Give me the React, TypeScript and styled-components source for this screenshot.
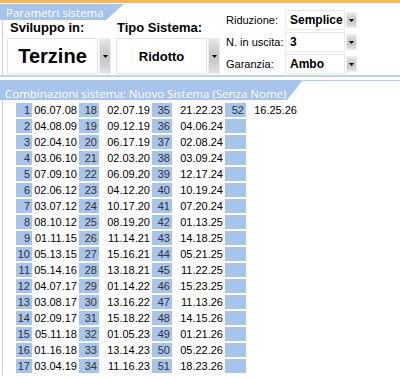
import styled, { createGlobalStyle } from 'styled-components'

const GlobalStyle = createGlobalStyle`
  body {
    margin: 0;
    background: #fff;
    font-family: 'Liberation Sans', Arial, sans-serif;
  }
`

const col1 = ['06.07.08', '04.08.09', '02.04.10', '03.06.10', '07.09.10', '02.06.12', '03.07.12', '08.10.12', '01.11.15', '05.13.15', '05.14.16', '04.07.17', '03.08.17', '02.09.17', '05.11.18', '01.16.18', '03.04.19']
const col2 = ['02.07.19', '09.12.19', '06.17.19', '02.03.20', '06.09.20', '04.12.20', '10.17.20', '08.19.20', '11.14.21', '15.16.21', '13.18.21', '01.14.22', '13.16.22', '15.18.22', '01.05.23', '13.14.23', '11.16.23']
const col3 = ['21.22.23', '04.06.24', '02.08.24', '03.09.24', '12.17.24', '10.19.24', '07.20.24', '01.13.25', '14.18.25', '05.21.25', '11.22.25', '15.23.25', '11.13.26', '14.15.26', '01.21.26', '05.22.26', '18.23.26']
const col4 = ['16.25.26']

const columns = [col1, col2, col3, col4]

const DropButton = ({ $inset }: { $inset?: boolean }) => (
  <Button $inset={$inset}>
    <svg width="5" height="3" viewBox="0 0 5 3">
      <path d="M0 0h5L2.5 3z" fill="#000" />
    </svg>
  </Button>
)

const App = () => {
  const rows = Array.from({ length: 17 }, (_, r) => r)

  return (
    <Page>
      <GlobalStyle />
      <TopBand />
      <ParamSection>
        <LeftBlock>
          <Tab>Parametri sistema</Tab>
          <Groups>
            <Group>
              <GroupLabel $indent={3}>Sviluppo in:</GroupLabel>
              <BigSelect>
                <BigValue $size={20}>Terzine</BigValue>
                <DropButton />
              </BigSelect>
            </Group>
            <Group>
              <GroupLabel $indent={1}>Tipo Sistema:</GroupLabel>
              <BigSelect>
                <BigValue $size={13}>Ridotto</BigValue>
                <DropButton />
              </BigSelect>
            </Group>
          </Groups>
        </LeftBlock>
        <FormBlock>
          <FormRow>
            <FormLabel>Riduzione:</FormLabel>
            <SmallValue>Semplice</SmallValue>
            <DropButton $inset />
          </FormRow>
          <FormRow>
            <FormLabel>N. in uscita:</FormLabel>
            <SmallValue>3</SmallValue>
            <DropButton $inset />
          </FormRow>
          <FormRow>
            <FormLabel>Garanzia:</FormLabel>
            <SmallValue>Ambo</SmallValue>
            <DropButton $inset />
          </FormRow>
        </FormBlock>
      </ParamSection>

      <ComboSection>
        <TabRow>
          <Tab $tall>Combinazioni sistema: Nuovo Sistema (Senza Nome)</Tab>
          <TabLine />
        </TabRow>
        <GridBody>
          <Grid>
            {rows.map((r) =>
              columns.map((col, c) => {
                const n = c * 17 + r + 1
                const value = col[r]
                const showNum = value !== undefined
                return [
                  <NumCell key={`n${r}-${c}`}>{showNum ? n : ''}</NumCell>,
                  <ValCell key={`v${r}-${c}`}>{value ?? ''}</ValCell>,
                ]
              })
            )}
          </Grid>
        </GridBody>
      </ComboSection>
    </Page>
  )
}

export default App

const Page = styled.div`
  width: 400px;
  height: 378px;
  overflow: hidden;
  background: #fff;
`
const TopBand = styled.div`
  height: 3px;
  background: #f6b65b;
`
const ParamSection = styled.div`
  display: flex;
  border-bottom: 2px solid #bcd3f0;
`
const LeftBlock = styled.div`
  display: flex;
  flex-direction: column;
  width: 220px;
`
const Tab = styled.div<{ $tall?: boolean }>`
  box-sizing: border-box;
  width: ${(p) => (p.$tall ? '303px' : '124px')};
  height: ${(p) => (p.$tall ? '20px' : '16px')};
  margin-top: ${(p) => (p.$tall ? '0' : '1px')};
  padding: ${(p) => (p.$tall ? '7px 0 0 5px' : '1px 0 0 6px')};
  line-height: ${(p) => (p.$tall ? '13px' : '15px')};
  background: #a6c4ec;
  color: #fff;
  font-family: 'Open Sans', sans-serif;
  font-size: 11.5px;
  white-space: nowrap;
  clip-path: ${(p) =>
    p.$tall
      ? 'polygon(0 0, 100% 0, calc(100% - 16px) 100%, 0 100%)'
      : 'polygon(0 0, 100% 0, calc(100% - 18px) 100%, 0 100%)'};
`
const Groups = styled.div`
  display: flex;
  gap: 5px;
  margin-left: 2px;
  padding: 0 0 1px 4px;
  border-left: 1px solid #c6d0de;
`
const Group = styled.div`
  display: flex;
  flex-direction: column;
  gap: 2px;
`
const GroupLabel = styled.div<{ $indent: number }>`
  height: 16px;
  line-height: 16px;
  padding-left: ${(p) => p.$indent}px;
  font-size: 13px;
  font-weight: bold;
  color: #000;
`
const BigSelect = styled.div`
  display: flex;
  gap: 1px;
  height: 36px;
`
const BigValue = styled.div<{ $size: number }>`
  box-sizing: border-box;
  width: 91px;
  height: 36px;
  border: 1px solid #e4e4e4;
  display: flex;
  align-items: center;
  justify-content: center;
  font-size: ${(p) => p.$size}px;
  font-weight: bold;
  color: #000;
`
const Button = styled.div<{ $inset?: boolean }>`
  box-sizing: border-box;
  width: ${(p) => (p.$inset ? '11px' : '12px')};
  align-self: stretch;
  margin: ${(p) => (p.$inset ? '2px 0' : '0')};
  display: flex;
  align-items: center;
  justify-content: center;
  background: linear-gradient(#e6e6e6, #c9c9c9 45%, #c6c6c6 60%, #e2e2e2);
  border: 1px solid #ededed;
`
const FormBlock = styled.div`
  display: flex;
  flex-direction: column;
  gap: 2px;
  margin-left: 6px;
  padding-top: 7px;
`
const FormRow = styled.div`
  display: flex;
  align-items: stretch;
  height: 20px;
`
const FormLabel = styled.div`
  width: 59px;
  line-height: 20px;
  font-size: 11px;
  color: #000;
  white-space: nowrap;
`
const SmallValue = styled.div`
  box-sizing: border-box;
  width: 60px;
  margin-right: 1px;
  padding-left: 4px;
  border: 1px solid #e8e8e8;
  line-height: 18px;
  font-size: 12px;
  font-weight: bold;
  color: #000;
`
const ComboSection = styled.div`
  margin-top: 3px;
`
const TabRow = styled.div`
  display: flex;
`
const TabLine = styled.div`
  flex: 1;
  margin-left: -16px;
  border-top: 1px solid #b4cdee;
`
const GridBody = styled.div`
  margin-left: 2px;
  padding: 3px 0 2px 13px;
  border-left: 1px solid #c6d0de;
`
const Grid = styled.div`
  display: grid;
  grid-template-columns: 16px 47px 20px 53px 20px 53px 21px 53px;
  grid-auto-rows: 14px;
  row-gap: 2px;
  font-size: 11px;
  line-height: 14px;
`
const NumCell = styled.div`
  background: #a6c4ec;
  color: #333;
  text-align: right;
  padding-right: 2px;
`
const ValCell = styled.div`
  color: #000;
  text-align: right;
  padding-right: 2px;
`
